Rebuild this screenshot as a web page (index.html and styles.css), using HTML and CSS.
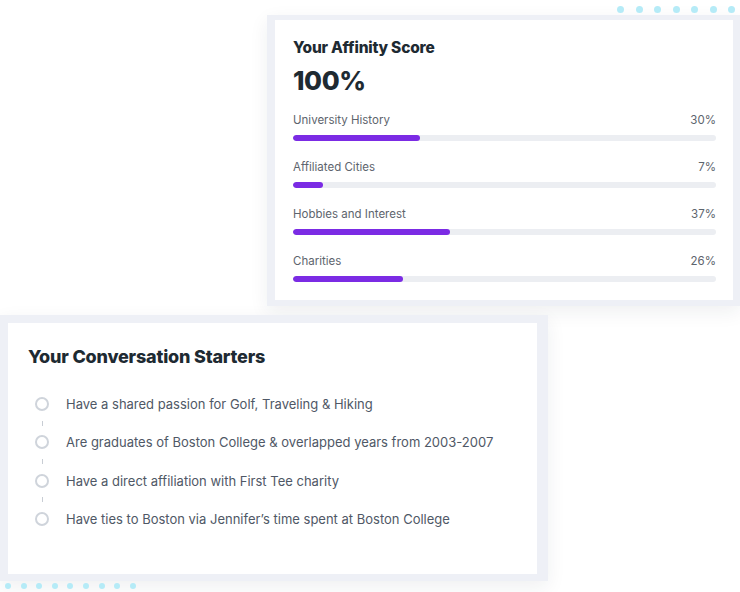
FILE: index.html
```html
<!DOCTYPE html>
<html lang="en">
<head>
<meta charset="utf-8">
<title>Affinity</title>
<link rel="stylesheet" href="styles.css">
</head>
<body>
<div class="page">
  <div class="dots dots-top">
    <span class="dot"></span><span class="dot"></span><span class="dot"></span><span class="dot"></span><span class="dot"></span><span class="dot"></span><span class="dot"></span>
  </div>
  <section class="frame frame-affinity">
    <div class="card card-affinity">
      <h2 class="card-title">Your Affinity Score</h2>
      <div class="score">100%</div>
      <div class="metric">
        <div class="metric-head"><span>University History</span><span>30%</span></div>
        <div class="track"><div class="fill" style="width:30%"></div></div>
      </div>
      <div class="metric">
        <div class="metric-head"><span>Affiliated Cities</span><span>7%</span></div>
        <div class="track"><div class="fill" style="width:7%"></div></div>
      </div>
      <div class="metric">
        <div class="metric-head"><span>Hobbies and Interest</span><span>37%</span></div>
        <div class="track"><div class="fill" style="width:37%"></div></div>
      </div>
      <div class="metric">
        <div class="metric-head"><span>Charities</span><span>26%</span></div>
        <div class="track"><div class="fill" style="width:26%"></div></div>
      </div>
    </div>
  </section>
  <section class="frame frame-starters">
    <div class="card card-starters">
      <h2 class="card-title starters-title">Your Conversation Starters</h2>
      <ul class="starters">
        <li class="starter"><span class="circle"></span><span>Have a shared passion for Golf, Traveling &amp; Hiking</span></li>
        <li class="connector"><span class="dash"></span></li>
        <li class="starter"><span class="circle"></span><span>Are graduates of Boston College &amp; overlapped years from 2003-2007</span></li>
        <li class="connector"><span class="dash"></span></li>
        <li class="starter"><span class="circle"></span><span>Have a direct affiliation with First Tee charity</span></li>
        <li class="connector"><span class="dash"></span></li>
        <li class="starter"><span class="circle"></span><span>Have ties to Boston via Jennifer’s time spent at Boston College</span></li>
      </ul>
    </div>
  </section>
  <div class="dots dots-bottom">
    <span class="dot"></span><span class="dot"></span><span class="dot"></span><span class="dot"></span><span class="dot"></span><span class="dot"></span><span class="dot"></span><span class="dot"></span><span class="dot"></span>
  </div>
</div>
</body>
</html>
```
FILE: styles.css
```css
* { box-sizing: border-box; }
html, body {
  margin: 0;
  padding: 0;
  background: #ffffff;
}
body {
  width: 740px;
  height: 592px;
  overflow: hidden;
  font-family: Inter, "Noto Sans", "Liberation Sans", sans-serif;
  color: #1e2a32;
}
.page {
  padding-top: 6px;
}
.dots {
  display: flex;
  height: 7px;
}
.dots-top {
  justify-content: flex-end;
  gap: 11.5px;
  padding-right: 5px;
}
.dots-top .dot {
  width: 7px;
  height: 7px;
}
.dot {
  display: block;
  border-radius: 50%;
  background: #b5ebf7;
}
.dots-bottom {
  gap: 9.6px;
  padding-left: 5px;
  margin-top: 2px;
  height: 6px;
}
.dots-bottom .dot {
  width: 6px;
  height: 6px;
}
.frame {
  background: #eef0f6;
  box-shadow: 0 6px 18px rgba(30, 40, 60, 0.07);
}
.frame-affinity {
  margin-top: 2px;
  margin-left: 267px;
  padding: 5px 7px 6px 8px;
}
.card {
  background: #ffffff;
}
.card-affinity {
  padding: 19px 17px 18px 18px;
}
.card-title {
  margin: 0;
  font-size: 15.5px;
  line-height: 18px;
  font-weight: 800;
  letter-spacing: -0.2px;
  color: #1e2a32;
}
.score {
  margin-top: 9px;
  font-size: 26px;
  line-height: 30px;
  font-weight: 800;
  letter-spacing: -0.4px;
  color: #1e2a32;
}
.metric {
  margin-top: 16px;
}
.metric + .metric {
  margin-top: 18px;
}
.metric-head {
  display: flex;
  justify-content: space-between;
  font-size: 11.5px;
  line-height: 16px;
  color: #5d646d;
}
.track {
  margin-top: 7px;
  height: 6px;
  border-radius: 3px;
  background: #eceef2;
  overflow: hidden;
}
.fill {
  height: 100%;
  border-radius: 3px;
  background: #7b2be4;
}
.frame-starters {
  margin-top: 9px;
  width: 548px;
  padding: 8px 11px 7px 8px;
}
.card-starters {
  padding: 23px 20px 45px 20px;
}
.starters-title {
  font-size: 18px;
  line-height: 22px;
  letter-spacing: -0.2px;
}
.starters {
  list-style: none;
  margin: 26px 0 0 0;
  padding: 0;
}
.starter {
  display: flex;
  align-items: center;
  gap: 17px;
  height: 20px;
  font-size: 13px;
  white-space: nowrap;
  color: #4f5866;
  padding-left: 7px;
}
.circle {
  flex: none;
  width: 14px;
  height: 14px;
  border-radius: 50%;
  border: 2px solid #cfd4db;
}
.connector {
  height: 18.4px;
  display: flex;
  align-items: center;
  padding-left: 13.5px;
}
.dash {
  display: block;
  width: 1.5px;
  height: 5px;
  background: #c8cdd4;
}
```
